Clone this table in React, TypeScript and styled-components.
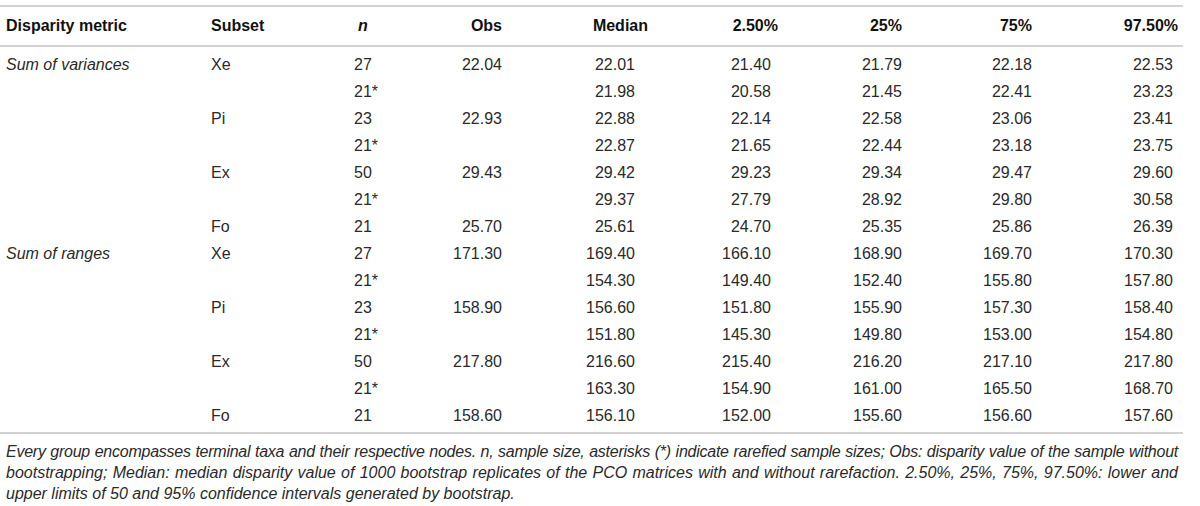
import React from "react";
import styled, { createGlobalStyle } from "styled-components";

const GlobalStyle = createGlobalStyle`
  html, body {
    margin: 0;
    padding: 0;
    background: #ffffff;
  }
  body {
    font-family: "Liberation Sans", Arial, Helvetica, sans-serif;
    color: #222222;
  }
`;

// column widths (px) and the side padding of header / body cells
type Col = {
  width: number;
  align: "left" | "right";
  pad: number;
  headPad: number;
};

const COLS: Col[] = [
  { width: 200, align: "left", pad: 6, headPad: 6 },
  { width: 130, align: "left", pad: 11, headPad: 11 },
  { width: 65, align: "left", pad: 24, headPad: 28 },
  { width: 115, align: "right", pad: 8, headPad: 8 },
  { width: 145, align: "right", pad: 20, headPad: 7 },
  { width: 130, align: "right", pad: 14, headPad: 7 },
  { width: 125, align: "right", pad: 8, headPad: 8 },
  { width: 130, align: "right", pad: 8, headPad: 8 },
  { width: 143, align: "right", pad: 10, headPad: 5 },
];

const template = COLS.map(c => `${c.width}px`).join(" ");

const Page = styled.div`
  width: 1183px;
  padding-top: 5px;
`;

const HeadRow = styled.div`
  display: grid;
  grid-template-columns: ${template};
  height: 38px;
  align-items: center;
  border-top: 2px solid #d2d2d2;
  border-bottom: 2px solid #d2d2d2;
`;

const Body = styled.div`
  padding: 4px 0 3px;
  border-bottom: 2px solid #d2d2d2;
`;

const Row = styled.div`
  display: grid;
  grid-template-columns: ${template};
  height: 27px;
  align-items: center;
`;

const Cell = styled.div<{ $align: string; $pad: number; $italic?: boolean }>`
  font-size: 16px;
  line-height: 20px;
  white-space: nowrap;
  text-align: ${p => p.$align};
  padding-left: ${p => (p.$align === "left" ? p.$pad : 0)}px;
  padding-right: ${p => (p.$align === "right" ? p.$pad : 0)}px;
  font-style: ${p => (p.$italic ? "italic" : "normal")};
  color: #2a2a2a;
`;

const HeadCell = styled(Cell)`
  font-weight: 700;
  color: #111111;
`;

const Note = styled.div`
  width: 1172px;
  padding: 7px 0 0 6px;
  font-size: 16px;
  line-height: 21px;
  font-style: italic;
  color: #2a2a2a;
`;

const NoteLine = styled.div<{ $justify?: boolean; $tight?: boolean }>`
  white-space: nowrap;
  text-align: ${p => (p.$justify ? "justify" : "left")};
  text-align-last: ${p => (p.$justify ? "justify" : "left")};
  letter-spacing: ${p => (p.$tight ? "-0.25px" : "normal")};
`;

const HEAD = [
  "Disparity metric",
  "Subset",
  "n",
  "Obs",
  "Median",
  "2.50%",
  "25%",
  "75%",
  "97.50%",
];

const ROWS: string[][] = [
  ["Sum of variances", "Xe", "27", "22.04", "22.01", "21.40", "21.79", "22.18", "22.53"],
  ["", "", "21*", "", "21.98", "20.58", "21.45", "22.41", "23.23"],
  ["", "Pi", "23", "22.93", "22.88", "22.14", "22.58", "23.06", "23.41"],
  ["", "", "21*", "", "22.87", "21.65", "22.44", "23.18", "23.75"],
  ["", "Ex", "50", "29.43", "29.42", "29.23", "29.34", "29.47", "29.60"],
  ["", "", "21*", "", "29.37", "27.79", "28.92", "29.80", "30.58"],
  ["", "Fo", "21", "25.70", "25.61", "24.70", "25.35", "25.86", "26.39"],
  ["Sum of ranges", "Xe", "27", "171.30", "169.40", "166.10", "168.90", "169.70", "170.30"],
  ["", "", "21*", "", "154.30", "149.40", "152.40", "155.80", "157.80"],
  ["", "Pi", "23", "158.90", "156.60", "151.80", "155.90", "157.30", "158.40"],
  ["", "", "21*", "", "151.80", "145.30", "149.80", "153.00", "154.80"],
  ["", "Ex", "50", "217.80", "216.60", "215.40", "216.20", "217.10", "217.80"],
  ["", "", "21*", "", "163.30", "154.90", "161.00", "165.50", "168.70"],
  ["", "Fo", "21", "158.60", "156.10", "152.00", "155.60", "156.60", "157.60"],
];

export default function App() {
  return (
    <>
      <GlobalStyle />
      <Page>
        <HeadRow>
          {HEAD.map((h, i) => (
            <HeadCell
              key={h}
              $align={COLS[i].align}
              $pad={COLS[i].headPad}
              $italic={i === 2}
            >
              {h}
            </HeadCell>
          ))}
        </HeadRow>
        <Body>
          {ROWS.map((r, ri) => (
            <Row key={ri}>
              {r.map((v, i) => (
                <Cell
                  key={i}
                  $align={COLS[i].align}
                  $pad={COLS[i].pad}
                  $italic={i === 0}
                >
                  {v}
                </Cell>
              ))}
            </Row>
          ))}
        </Body>
        <Note>
          <NoteLine $justify $tight>
            Every group encompasses terminal taxa and their respective nodes. n,
            sample size, asterisks (*) indicate rarefied sample sizes; Obs:
            disparity value of the sample without
          </NoteLine>
          <NoteLine $justify>
            bootstrapping; Median: median disparity value of 1000 bootstrap
            replicates of the PCO matrices with and without rarefaction. 2.50%,
            25%, 75%, 97.50%: lower and
          </NoteLine>
          <NoteLine>
            upper limits of 50 and 95% confidence intervals generated by
            bootstrap.
          </NoteLine>
        </Note>
      </Page>
    </>
  );
}
